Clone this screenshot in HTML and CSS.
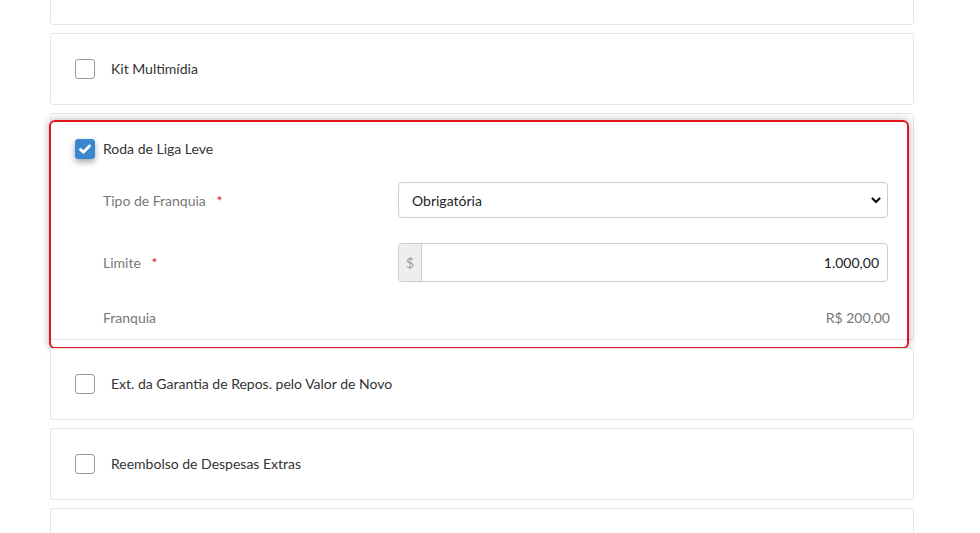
FILE: index.html
```html
<!DOCTYPE html>
<html lang="pt-BR">
<head>
    <meta charset="UTF-8">
    <meta name="viewport" content="width=device-width, initial-scale=1.0">
    <title>Coberturas adicionais</title>
    <link rel="stylesheet" href="styles.css">
</head>
<body>
    <div class="options">
        <div class="option option-empty"></div>

        <div class="option">
            <label class="check">
                <span class="box"></span>
                <span class="check-label">Kit Multimídia</span>
            </label>
        </div>

        <div class="option option-open">
            <label class="check checked">
                <span class="box">
                    <svg viewBox="0 0 20 20" fill="none" stroke="white" stroke-width="3.2" stroke-linecap="round" stroke-linejoin="round">
                        <path d="M5 10.5l3.2 3.2 6.8-7" />
                    </svg>
                </span>
                <span class="check-label">Roda de Liga Leve</span>
            </label>

            <div class="fields">
                <div class="field">
                    <span class="field-label">Tipo de Franquia <em>*</em></span>
                    <div class="select">
                        <span>Obrigatória</span>
                        <svg viewBox="0 0 12 12" fill="none" stroke="#111" stroke-width="2.2" stroke-linecap="round" stroke-linejoin="round">
                            <path d="M2.5 4.5L6 8l3.5-3.5" />
                        </svg>
                    </div>
                </div>
                <div class="field">
                    <span class="field-label">Limite <em>*</em></span>
                    <div class="input-group">
                        <span class="addon">$</span>
                        <span class="input">1.000,00</span>
                    </div>
                </div>
                <div class="field field-static">
                    <span class="field-label">Franquia</span>
                    <span class="static-value">R$ 200,00</span>
                </div>
            </div>

            <!-- highlight frame drawn over the selected card -->
            <div class="highlight"></div>
        </div>

        <div class="option">
            <label class="check">
                <span class="box"></span>
                <span class="check-label">Ext. da Garantia de Repos. pelo Valor de Novo</span>
            </label>
        </div>

        <div class="option">
            <label class="check">
                <span class="box"></span>
                <span class="check-label">Reembolso de Despesas Extras</span>
            </label>
        </div>

        <div class="option option-empty"></div>
    </div>
</body>
</html>
```

FILE: styles.css
```css
:root {
    --text-color: #333;
    --muted-color: #777;
    --border-color: #e6e6e6;
    --input-border: #ccc;
    --check-blue: #3a87d0;
    --highlight-red: #e2141c;
}

* {
    margin: 0;
    padding: 0;
    box-sizing: border-box;
}

body {
    font-family: Lato, "Liberation Sans", sans-serif;
    font-size: 14px;
    color: var(--text-color);
    background: white;
    overflow: hidden;
}

.options {
    width: 864px;
    margin: -47px 0 0 50px;
    display: flex;
    flex-direction: column;
    gap: 8px;
}

.option {
    position: relative;
    background: white;
    border: 1px solid var(--border-color);
    border-radius: 3px;
    padding: 25px 25px 25px 24px;
}

.option-empty {
    height: 72px;
}

.option-open {
    padding-bottom: 12px;
}

.check {
    display: flex;
    align-items: center;
    height: 20px;
    line-height: 20px;
}

.box {
    width: 20px;
    height: 20px;
    border: 1px solid #9a9a9a;
    border-radius: 3px;
    margin-right: 16px;
    flex-shrink: 0;
}

.check-label {
    font-size: 14px;
    color: var(--text-color);
}

.checked .box {
    background: var(--check-blue);
    border-color: var(--check-blue);
    box-shadow: 0 3px 6px rgba(0, 0, 0, 0.35);
    margin-right: 8px;
}

.checked .box svg {
    display: block;
    width: 18px;
    height: 18px;
}

.fields {
    margin: 23px 0 0 28px;
    display: flex;
    flex-direction: column;
    gap: 25px;
}

.field {
    display: grid;
    grid-template-columns: 295px 1fr;
    align-items: center;
}

.field-label {
    color: var(--muted-color);
    font-size: 14px;
}

.field-label em {
    font-style: normal;
    color: #d9121a;
    margin-left: 7px;
}

.select {
    height: 36px;
    border: 1px solid var(--input-border);
    border-radius: 4px;
    display: flex;
    align-items: center;
    justify-content: space-between;
    padding: 0 5px 0 13px;
    color: #222;
}

.select svg {
    width: 12px;
    height: 12px;
}

.input-group {
    height: 39px;
    display: flex;
    border: 1px solid var(--input-border);
    border-radius: 4px;
    overflow: hidden;
}

.addon {
    width: 23px;
    background: #eee;
    border-right: 1px solid var(--input-border);
    color: #999;
    display: flex;
    align-items: center;
    justify-content: center;
}

.input {
    flex: 1;
    display: flex;
    align-items: center;
    justify-content: flex-end;
    padding-right: 8px;
    color: #222;
}

.field-static {
    height: 20px;
}

.static-value {
    text-align: right;
    color: var(--muted-color);
    margin-right: -2px;
}

.highlight {
    position: absolute;
    top: 6px;
    left: -2px;
    width: 860px;
    height: 229px;
    border: 2px solid var(--highlight-red);
    border-radius: 6px;
    box-shadow: 0 0 8px rgba(0, 0, 0, 0.3);
    pointer-events: none;
}
```
